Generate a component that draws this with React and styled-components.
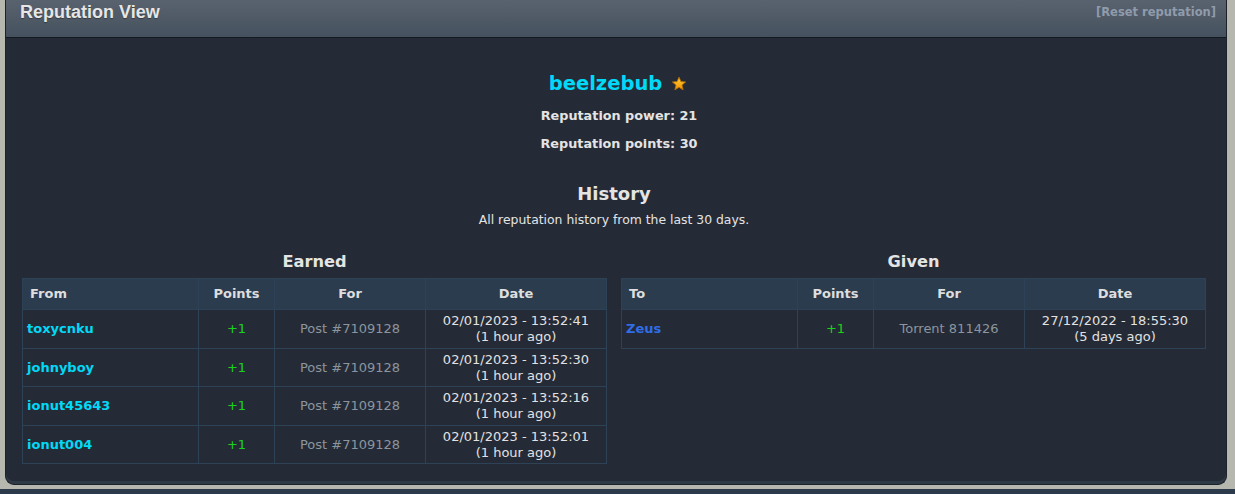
import React from "react";
import styled, { createGlobalStyle } from "styled-components";

const GlobalStyle = createGlobalStyle`
  html, body { margin: 0; padding: 0; }
  body {
    background: #b6b7ae;
    font-family: "DejaVu Sans", Verdana, sans-serif;
    color: #e2e2e2;
  }
`;

const Page = styled.div`
  width: 1235px;
  height: 494px;
  overflow: hidden;
  display: flex;
  flex-direction: column;
`;

const Panel = styled.section`
  flex-shrink: 0;
  margin: 0 8px 0 5px;
  border: 1px solid #1c222a;
  border-top: none;
  border-radius: 0 0 9px 9px;
  overflow: hidden;
  background: #252b36;
  box-shadow: inset 0 -3px 0 #2f3a47;
`;

const Header = styled.header`
  height: 38px;
  box-sizing: border-box;
  display: flex;
  justify-content: space-between;
  align-items: flex-start;
  padding: 2px 10px 0 14px;
  background: linear-gradient(#59636f, #45515e);
  border-bottom: 1px solid #141920;
`;

const Title = styled.h1`
  margin: 0;
  font-family: "Liberation Sans", Arial, sans-serif;
  font-weight: 700;
  font-size: 18px;
  line-height: 21px;
  color: #e6e6e6;
  text-shadow: 0 1px 1px rgba(0, 0, 0, 0.35);
`;

const ResetLink = styled.a`
  font-family: "DejaVu Sans", Verdana, sans-serif;
  font-size: 11.5px;
  font-weight: 700;
  line-height: 20px;
  color: #909bab;
  text-decoration: none;
`;

const Body = styled.div`
  padding: 34px 20px 20px 16px;
  display: flex;
  flex-direction: column;
  align-items: center;
`;

const NameRow = styled.div`
  display: flex;
  align-items: center;
  gap: 9px;
  margin-left: 8px;
`;

const UserName = styled.span`
  font-size: 19.5px;
  font-weight: 700;
  line-height: 24px;
  color: #00d9f7;
`;

const Stats = styled.div`
  margin-top: 6px;
  text-align: center;
`;

const Stat = styled.div`
  font-size: 12.8px;
  font-weight: 700;
  line-height: 28px;
  color: #e4e4e4;
  padding-left: 10px;
`;

const SectionTitle = styled.h2`
  margin: 25px 0 0;
  font-size: 18px;
  font-weight: 700;
  line-height: 22px;
  color: #e4e4e4;
`;

const Note = styled.p`
  margin: 7px 0 0;
  font-size: 12.4px;
  line-height: 16px;
  color: #e4e4e4;
`;

const Columns = styled.div`
  align-self: stretch;
  margin-top: 24px;
  display: grid;
  grid-template-columns: 585px 585px;
  column-gap: 14px;
`;

const Column = styled.div`
  display: flex;
  flex-direction: column;
`;

const TableTitle = styled.h3`
  margin: 0 0 6px;
  text-align: center;
  font-size: 16.2px;
  font-weight: 700;
  line-height: 20px;
  color: #e4e4e4;
`;

const Table = styled.table`
  width: 585px;
  table-layout: fixed;
  border-collapse: collapse;
  border: 1px solid #2e4257;
  font-size: 13px;
`;

const Th = styled.th`
  background: #2c3c4f;
  border: 1px solid #2e4257;
  padding: 7px 7px;
  line-height: 16px;
  font-weight: 700;
  color: #dedede;
  text-align: ${(p) => (p.$left ? "left" : "center")};
`;

const Td = styled.td`
  border: 1px solid #2e4257;
  padding: 3px 4px 2.5px;
  line-height: 16px;
  text-align: center;
  color: #e2e2e2;
`;

const UserCell = styled(Td)`
  text-align: left;
  font-weight: 700;
  color: ${(p) => p.$color};
`;

const PointsCell = styled(Td)`
  color: #1bd21b;
`;

const ForCell = styled(Td)`
  color: #8b959f;
`;

const Footer = styled.div`
  flex-shrink: 0;
  margin-top: 4px;
  height: 10px;
  background: #2b3b4c;
`;

const Star = () => (
  <svg width="16" height="16" viewBox="0 0 16 16">
    <defs>
      <linearGradient id="starG" x1="0" y1="0" x2="0" y2="1">
        <stop offset="0" stopColor="#ffd23a" />
        <stop offset="1" stopColor="#f39200" />
      </linearGradient>
    </defs>
    <path
      d="M8 1.2 L9.9 5.6 L14.6 6 L11 9.1 L12.1 13.8 L8 11.3 L3.9 13.8 L5 9.1 L1.4 6 L6.1 5.6 Z"
      fill="url(#starG)"
      stroke="#b86e00"
      strokeWidth="0.9"
      strokeLinejoin="round"
    />
  </svg>
);

const earned = [
  { user: "toxycnku", date: "02/01/2023 - 13:52:41", ago: "(1 hour ago)" },
  { user: "johnyboy", date: "02/01/2023 - 13:52:30", ago: "(1 hour ago)" },
  { user: "ionut45643", date: "02/01/2023 - 13:52:16", ago: "(1 hour ago)" },
  { user: "ionut004", date: "02/01/2023 - 13:52:01", ago: "(1 hour ago)" },
].map((r) => ({ ...r, points: "+1", forText: "Post #7109128" }));

const given = [
  {
    user: "Zeus",
    points: "+1",
    forText: "Torrent 811426",
    date: "27/12/2022 - 18:55:30",
    ago: "(5 days ago)",
  },
];

const HistoryTable = ({ title, who, rows, color }) => (
  <Column>
    <TableTitle>{title}</TableTitle>
    <Table>
      <colgroup>
        <col style={{ width: 176 }} />
        <col style={{ width: 76 }} />
        <col style={{ width: 151 }} />
        <col />
      </colgroup>
      <thead>
        <tr>
          <Th $left>{who}</Th>
          <Th>Points</Th>
          <Th>For</Th>
          <Th>Date</Th>
        </tr>
      </thead>
      <tbody>
        {rows.map((r, i) => (
          <tr key={i}>
            <UserCell $color={color}>{r.user}</UserCell>
            <PointsCell>{r.points}</PointsCell>
            <ForCell>{r.forText}</ForCell>
            <Td>
              {r.date}
              <br />
              {r.ago}
            </Td>
          </tr>
        ))}
      </tbody>
    </Table>
  </Column>
);

export default function App() {
  return (
    <Page>
      <GlobalStyle />
      <Panel>
        <Header>
          <Title>Reputation View</Title>
          <ResetLink href="#">[Reset reputation]</ResetLink>
        </Header>
        <Body>
          <NameRow>
            <UserName>beelzebub</UserName>
            <Star />
          </NameRow>
          <Stats>
            <Stat>Reputation power: 21</Stat>
            <Stat>Reputation points: 30</Stat>
          </Stats>
          <SectionTitle>History</SectionTitle>
          <Note>All reputation history from the last 30 days.</Note>
          <Columns>
            <HistoryTable title="Earned" who="From" rows={earned} color="#00d9f7" />
            <HistoryTable title="Given" who="To" rows={given} color="#2f6ee8" />
          </Columns>
        </Body>
      </Panel>
      <Footer />
    </Page>
  );
}
